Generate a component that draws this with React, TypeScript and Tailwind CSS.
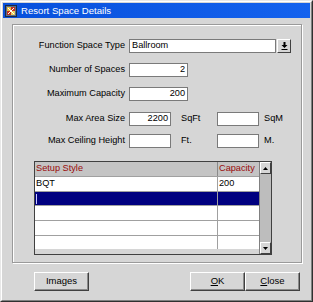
import { ReactNode } from 'react';

const font = { fontFamily: '"Liberation Sans", Arial, sans-serif' };

function Field({ w, value, right }: { w: string; value?: string; right?: boolean }) {
  return (
    <div className={`${w} h-[14px] bg-white border border-[#7a7a7a] flex items-center px-[2px] text-[9.2px] leading-none text-black ${right ? 'justify-end' : ''}`}>
      {value}
    </div>
  );
}

function Row({ label, children, mt }: { label: string; children: ReactNode; mt: string }) {
  return (
    <div className={`flex items-center h-[14px] ${mt}`}>
      <div className="w-[112px] text-right text-[9.2px] leading-none text-black pr-[0px]">{label}</div>
      <div className="ml-[4px] flex items-center">{children}</div>
    </div>
  );
}

function Btn({ children, x }: { children: ReactNode; x?: string }) {
  return (
    <div className={`${x ?? ''} w-[55px] h-[19px] flex items-center justify-center text-[9.5px] text-black bg-[#d6d6d6] border border-t-white border-l-white border-r-[#404040] border-b-[#404040] shadow-[inset_-1px_-1px_0_#8a8a8a]`}>
      {children}
    </div>
  );
}

function ArrowBox({ up }: { up?: boolean }) {
  return (
    <div className="w-[11px] h-[12px] bg-[#d6d6d6] border border-t-white border-l-white border-r-[#404040] border-b-[#404040] flex items-center justify-center">
      <svg width="5" height="3" viewBox="0 0 5 3">
        {up ? <path d="M0 3 L2.5 0 L5 3 Z" fill="#000" /> : <path d="M0 0 L5 0 L2.5 3 Z" fill="#000" />}
      </svg>
    </div>
  );
}

const rows = [
  { style: 'BQT', cap: '200', h: 'h-[15px]' },
  { style: '', cap: '', h: 'h-[14px]', sel: true },
  { style: '', cap: '', h: 'h-[15px]' },
  { style: '', cap: '', h: 'h-[15px]' },
  { style: '', cap: '', h: 'h-[14px]' },
];

export default function App() {
  return (
    <div style={font} className="w-[313px] h-[302px] bg-[#d6d6d6] border border-t-[#e8e8e8] border-l-[#e8e8e8] border-r-[#303030] border-b-[#303030] overflow-hidden">
      <div className="w-full h-full border border-t-white border-l-white border-r-[#808080] border-b-[#808080] p-[1px]">
        {/* title bar */}
        <div className="h-[15px] bg-gradient-to-r from-[#0850dc] to-[#1462ee] flex items-center pl-[2px]">
          <svg width="12" height="12" viewBox="0 0 12 12">
            <rect x="0.5" y="0.5" width="11" height="11" fill="#5a6e8c" stroke="#1a2a44" />
            <rect x="2" y="2" width="4" height="4" fill="#e8c040" />
            <rect x="6" y="2" width="4" height="4" fill="#c03020" />
            <rect x="2" y="6" width="4" height="4" fill="#c03020" />
            <rect x="6" y="6" width="4" height="4" fill="#e8d060" />
            <path d="M3 3 L9 9 M9 3 L3 9" stroke="#fff" strokeWidth="1" />
          </svg>
          <span className="ml-[4px] text-white text-[9.6px] leading-none">Resort Space Details</span>
        </div>

        {/* group box */}
        <div className="ml-[9px] mt-[6px] w-[290px] h-[239px] border border-[#9a9a9a] shadow-[inset_1px_1px_0_#fff,1px_1px_0_#fff] pt-[14px]">
          <Row label="Function Space Type" mt="mt-0">
            <Field w="w-[147px]" value="Ballroom" />
            <div className="ml-[1px] w-[14px] h-[14px] bg-[#d6d6d6] border border-t-white border-l-white border-r-[#404040] border-b-[#404040] flex items-center justify-center">
              <svg width="7" height="8" viewBox="0 0 7 8">
                <path d="M2.5 0 H4.5 V3 H6.5 L3.5 6 L0.5 3 H2.5 Z" fill="#000" />
                <rect x="0.5" y="7" width="6" height="1" fill="#000" />
              </svg>
            </div>
          </Row>
          <Row label="Number of Spaces" mt="mt-[10px]">
            <Field w="w-[59px]" value="2" right />
          </Row>
          <Row label="Maximum Capacity" mt="mt-[10px]">
            <Field w="w-[59px]" value="200" right />
          </Row>
          <Row label="Max Area Size" mt="mt-[11px]">
            <Field w="w-[42px]" value="2200" right />
            <span className="ml-[10px] w-[36px] text-[9.2px] leading-none">SqFt</span>
            <Field w="w-[42px]" />
            <span className="ml-[5px] text-[9.2px] leading-none">SqM</span>
          </Row>
          <Row label="Max Ceiling Height" mt="mt-[8px]">
            <Field w="w-[42px]" />
            <span className="ml-[10px] w-[36px] text-[9.2px] leading-none">Ft.</span>
            <Field w="w-[42px]" />
            <span className="ml-[5px] text-[9.2px] leading-none">M.</span>
          </Row>

          {/* table */}
          <div className="ml-[21px] mt-[13px] w-[238px] h-[94px] flex border border-[#404040]">
            <div className="flex-1 flex flex-col">
              <div className="h-[14px] flex bg-[#c4c4c4] text-[#9a0a0a] text-[9.2px] leading-none">
                <div className="flex-1 flex items-center pl-[1px] border-r border-[#8a8a8a]">Setup Style</div>
                <div className="w-[41px] flex items-center pl-[1px]">Capacity</div>
              </div>
              {rows.map((r, i) => (
                <div key={i} className={`${r.h} flex border-t border-[#a0a0a0] text-[9.2px] leading-none ${r.sel ? 'bg-[#000080]' : 'bg-white'}`}>
                  <div className="flex-1 flex items-center pl-[1px] border-r border-[#a0a0a0]">
                    {r.sel ? <div className="w-[1px] h-[10px] bg-[#c8c8ff]" /> : r.style}
                  </div>
                  <div className="w-[41px] flex items-center pl-[1px]">{r.cap}</div>
                </div>
              ))}
            </div>
            <div className="w-[12px] flex flex-col bg-[#bdbdbd] border-l border-[#808080]">
              <ArrowBox up />
              <div className="flex-1" />
              <ArrowBox />
            </div>
          </div>
        </div>

        {/* buttons */}
        <div className="flex mt-[9px] ml-[31px]">
          <Btn>Images</Btn>
          <Btn x="ml-[101px]">
            <span><span className="underline">O</span>K</span>
          </Btn>
          <Btn>
            <span><span className="underline">C</span>lose</span>
          </Btn>
        </div>
      </div>
    </div>
  );
}
